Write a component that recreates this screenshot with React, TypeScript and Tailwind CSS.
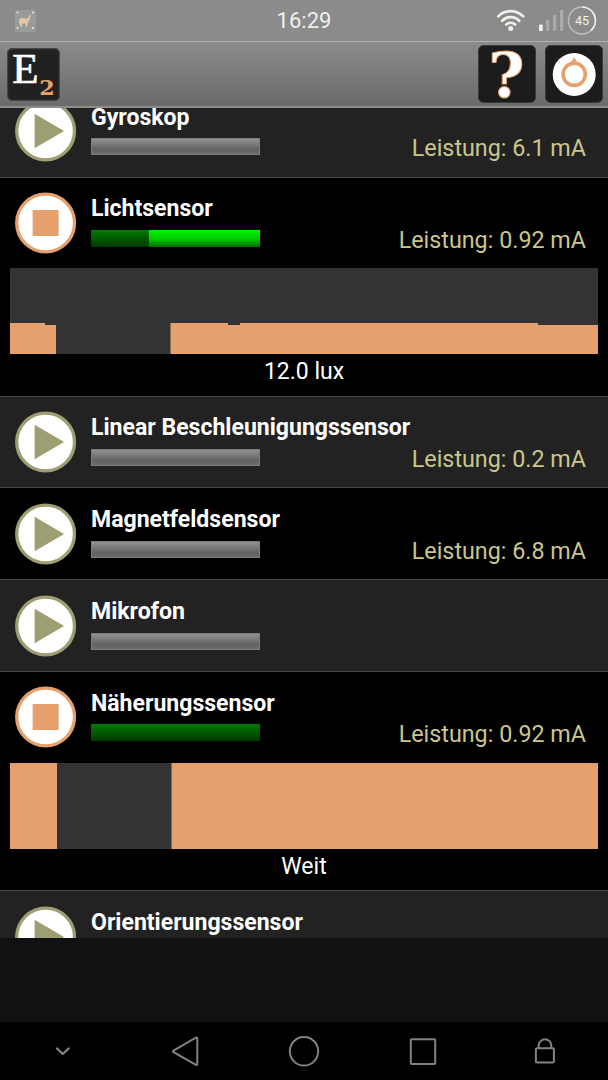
type Segment = { x: number; width: number; height: number }

type Sensor = {
  name: string
  power?: string
  bar: "idle" | "low" | "light"
  value?: string
  graph?: Segment[]
}

const SENSORS: Sensor[] = [
  { name: "Gyroskop", power: "6.1", bar: "idle" },
  {
    name: "Lichtsensor",
    power: "0.92",
    bar: "light",
    value: "12.0 lux",
    graph: [
      { x: 0, width: 35, height: 31 },
      { x: 35, width: 11, height: 29 },
      { x: 160.5, width: 57.5, height: 31 },
      { x: 218, width: 12, height: 29 },
      { x: 230, width: 298, height: 31 },
      { x: 528, width: 60, height: 29 },
    ],
  },
  { name: "Linear Beschleunigungssensor", power: "0.2", bar: "idle" },
  { name: "Magnetfeldsensor", power: "6.8", bar: "idle" },
  { name: "Mikrofon", bar: "idle" },
  {
    name: "Näherungssensor",
    power: "0.92",
    bar: "low",
    value: "Weit",
    graph: [
      { x: 0, width: 47, height: 86 },
      { x: 161.5, width: 426.5, height: 86 },
    ],
  },
  { name: "Orientierungssensor", bar: "idle" },
]

function StatusBar() {
  return (
    <div className="grid h-[41px] shrink-0 grid-cols-3 items-center bg-[#8b8b8b] text-[#f0f0ea]">
      <svg className="ml-[15px] h-[22px] w-[21px]" viewBox="0 0 21 22">
        <rect width="21" height="22" rx="2" fill="#999b9a" />
        <g fill="#e4e6e4">
          <circle cx="2.5" cy="2.5" r="1.1" />
          <circle cx="18" cy="2.5" r="1.1" />
          <circle cx="2.5" cy="18" r="1.1" />
          <circle cx="18" cy="18" r="1.1" />
        </g>
        <path
          d="M16.5 4l-2 .9-1.6 3.6-3-.1-4-.3-2 2 .4 3.4 1.3 3.3h1.3l.2-3 3.4-.3.4 3h1.2l.7-4.2 1.9-2.8 1-4.1z"
          fill="#e8c5aa"
        />
      </svg>
      <div className="pt-px text-center text-[22px] leading-none">16:29</div>
      <svg className="h-[41px] w-[203px]" viewBox="405 0 203 41" fill="none">
        <g stroke="#f0f0ea" strokeWidth="2.7" strokeLinecap="round">
          <path d="M498.2 16.4a17.5 17.5 0 0 1 25 0" />
          <path d="M502.2 20.7a12 12 0 0 1 17 0" />
          <path d="M506.3 24.5a6.5 6.5 0 0 1 8.8 0" />
        </g>
        <circle cx="510.7" cy="28.5" r="2.5" fill="#f0f0ea" />
        <rect x="539" y="24.5" width="3.8" height="6.5" rx=".8" fill="#f0f0ea" />
        <g fill="#aaaaa9">
          <rect x="546" y="20" width="3.4" height="11" rx=".8" />
          <rect x="553" y="15" width="3.4" height="16" rx=".8" />
          <rect x="560" y="10" width="3.4" height="21" rx=".8" />
        </g>
        <circle cx="582" cy="20.5" r="13.5" stroke="#bdbdb9" strokeWidth="1.5" />
        <path d="M582 7a13.5 13.5 0 0 1 9 23.5" stroke="#f0f0ea" strokeWidth="1.7" />
        <text x="582" y="25.4" fontSize="12.6" textAnchor="middle" fill="#f0f0ea">
          45
        </text>
      </svg>
    </div>
  )
}

function AppBar() {
  return (
    <header className="flex h-[67px] shrink-0 items-center border-t border-b-2 border-t-[#b0b0b0] border-b-[#8d8d8d] bg-linear-to-b from-[#8b8b8b] to-[#6b6b6b] pr-[5px] pl-[7px]">
      <svg className="h-[53px] w-[53px]" viewBox="0 0 53 53">
        <rect x=".6" y=".6" width="51.8" height="51.8" rx="4.5" fill="#212121" stroke="#46463e" strokeWidth="1.2" />
        <text x="5.2" y="35" fontSize="43" fill="#fff" stroke="#fff" strokeWidth=".7" className="font-['Liberation_Serif',serif]">
          E
        </text>
        <text
          x="32.2"
          y="47.2"
          fontSize="20.5"
          textLength="15.5"
          lengthAdjust="spacingAndGlyphs"
          fill="#e6a06e"
          className="font-['DejaVu_Serif',serif] font-bold"
        >
          2
        </text>
      </svg>
      <button className="ml-auto" aria-label="Hilfe">
        <svg className="h-[58px] w-[58px] overflow-visible" viewBox="0 0 58 58">
          <rect x=".5" y=".5" width="57" height="57" rx="5" fill="#1c1c1c" stroke="#3a3a36" />
          <text
            x="28.5"
            y="52.2"
            fontSize="62"
            textAnchor="middle"
            fill="#fff"
            stroke="#e6a06e"
            strokeWidth="1"
            className="font-['DejaVu_Serif',serif] font-bold"
          >
            ?
          </text>
        </svg>
      </button>
      <button className="ml-[9px]" aria-label="Aufnahme">
        <svg className="h-[58px] w-[58px]" viewBox="0 0 58 58">
          <rect x=".5" y=".5" width="57" height="57" rx="5" fill="#1c1c1c" stroke="#3a3a36" />
          <circle cx="29.2" cy="29.5" r="21.5" fill="#fff" />
          <path d="M25 19l4.2-6.7 4.2 6.7z" fill="#e6a06e" />
          <circle cx="29.2" cy="29.3" r="11.1" fill="none" stroke="#e6a06e" strokeWidth="3.6" />
        </svg>
      </button>
    </header>
  )
}

function ToggleButton({ active }: { active: boolean }) {
  return (
    <svg className="h-[62px] w-[62px] shrink-0" viewBox="0 0 62 62">
      <circle cx="31.6" cy="31" r="28.9" fill="#fff" stroke={active ? "#e6a06e" : "#9f9d72"} strokeWidth="3.3" />
      {active ? (
        <rect x="18.6" y="18" width="26" height="26" fill="#e6a06e" />
      ) : (
        <path d="M20.6 13.8L50.1 31 20.6 48.2z" fill="#9f9d72" />
      )}
    </svg>
  )
}

function LoadBar({ kind }: { kind: Sensor["bar"] }) {
  if (kind === "idle") {
    return (
      <div className="h-[17px] w-[169px] border border-[#7c7c7c] bg-linear-to-b from-[#929292] via-[#626361] via-70% to-[#6c6c6c]" />
    )
  }
  return (
    <div className="flex h-[17px] w-[169px] bg-linear-to-b from-[#007c00] to-[#003a00]">
      {kind === "light" && (
        <div className="ml-[57.5px] flex-1 bg-linear-to-b from-[#00f800] via-[#00c800] via-55% to-[#007000]" />
      )}
    </div>
  )
}

function Graph({ segments }: { segments: Segment[] }) {
  return (
    <svg className="mx-[10px] h-[86px] w-[588px] bg-[#333333]" viewBox="0 0 588 86">
      {segments.map((s) => (
        <rect key={s.x} x={s.x} y={86 - s.height} width={s.width} height={s.height} fill="#e6a06e" />
      ))}
    </svg>
  )
}

function SensorRow({ sensor }: { sensor: Sensor }) {
  return (
    <li className="border-t border-[#484848] odd:bg-[#222222] even:bg-black">
      <div className="flex h-[90.7px] pt-[14.4px] pr-[22px] pl-[14px]">
        <ToggleButton active={!!sensor.graph} />
        <div className="ml-[15px] w-[169px]">
          <div className="h-[38px] pt-[3.3px] text-[23.05px] leading-[28px] font-bold whitespace-nowrap text-white">
            {sensor.name}
          </div>
          <LoadBar kind={sensor.bar} />
        </div>
        {sensor.power && (
          <div className="mt-[34px] ml-auto text-[23.3px] leading-[28px] text-[#cac68c]">
            Leistung: {sensor.power} mA
          </div>
        )}
      </div>
      {sensor.graph && (
        <div className="h-[127.6px]">
          <Graph segments={sensor.graph} />
          <div className="mt-[4.3px] text-center text-[23px] leading-[28px] text-white">{sensor.value}</div>
        </div>
      )}
    </li>
  )
}

function NavigationBar() {
  return (
    <nav className="h-[58px] shrink-0 bg-black">
      <svg
        className="h-[58px] w-[608px]"
        viewBox="0 1022 608 58"
        fill="none"
        stroke="#828282"
        strokeWidth="2"
        strokeLinejoin="round"
        strokeLinecap="round"
      >
        <path d="M57 1048.5l5.8 5.5 5.8-5.5" strokeWidth="2.4" />
        <path d="M197.3 1038.2v26.2q-.5 1-1.8.3l-22-12.5q-1-.8 0-1.6l22-12.8q1.3-.6 1.8.4z" />
        <circle cx="304" cy="1051.3" r="14.2" />
        <rect x="410.8" y="1039.3" width="24.4" height="24.6" rx="1" />
        <rect x="535.9" y="1048.2" width="18" height="14.3" rx="1" />
        <path d="M538.7 1048v-2.4a6.3 6.3 0 0 1 12.6 0v2.4" />
      </svg>
    </nav>
  )
}

export default function App() {
  return (
    <div className="flex h-[1080px] w-[608px] flex-col overflow-hidden bg-[#111111] font-['Roboto',sans-serif]">
      <StatusBar />
      <AppBar />
      <main className="h-[830px] shrink-0 overflow-hidden">
        <ul className="-mt-[23.2px]">
          {SENSORS.map((sensor) => (
            <SensorRow key={sensor.name} sensor={sensor} />
          ))}
        </ul>
      </main>
      <div className="flex-1" />
      <NavigationBar />
    </div>
  )
}
